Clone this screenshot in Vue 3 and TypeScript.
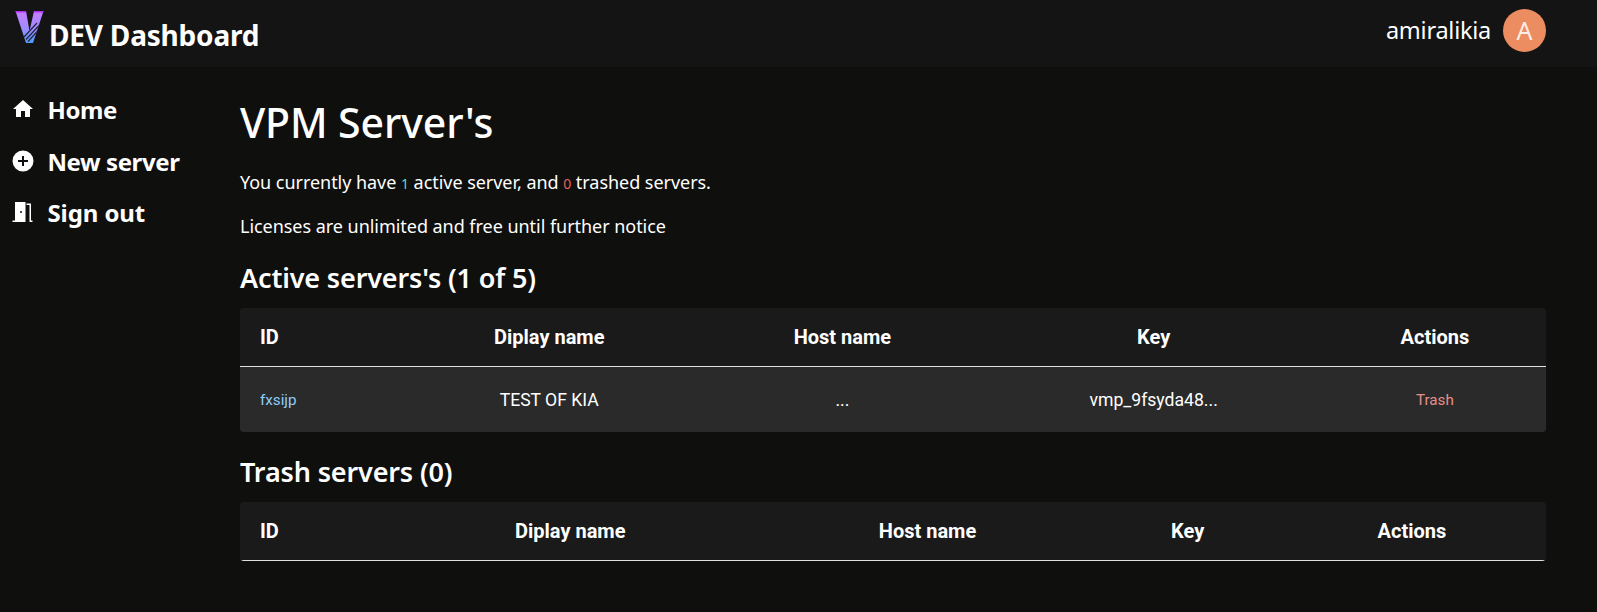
<script setup lang="ts">
interface Col { label: string; width: number }
const activeCols: Col[] = [
  { label: 'ID', width: 157 },
  { label: 'Diplay name', width: 304 },
  { label: 'Host name', width: 282 },
  { label: 'Key', width: 340 },
  { label: 'Actions', width: 222 },
]
const trashCols: Col[] = [
  { label: 'ID', width: 143 },
  { label: 'Diplay name', width: 374 },
  { label: 'Host name', width: 340 },
  { label: 'Key', width: 180 },
  { label: 'Actions', width: 268 },
]
</script>

<template>
  <div class="page">
    <header class="topbar">
      <div class="brand">
        <svg class="logo" width="30" height="34" viewBox="0 0 30 34">
          <defs>
            <linearGradient id="vg" x1="0" y1="0" x2="0" y2="1">
              <stop offset="0" stop-color="#c77dff" />
              <stop offset="0.55" stop-color="#a08cff" />
              <stop offset="1" stop-color="#4a9bff" />
            </linearGradient>
            <clipPath id="vc"><path d="M0.500 1H11L14.500 21L19 1H28.500L18 33H11Z" /></clipPath>
          </defs>
          <path d="M0.500 1H11L14.500 21L19 1H28.500L18 33H11Z" fill="url(#vg)" />
          <path d="M0.500 1H11L11.300 2.500H1ZM19 1H28.500L28 2.500H18.700Z" fill="#b030f0" />
          <g clip-path="url(#vc)" stroke="#23233a" stroke-width="1.200">
            <path d="M9 27L22 13M11 29.500L24 15.500M13 31.500L24 19.500" />
          </g>
        </svg>
        <span class="brand-text">DEV Dashboard</span>
      </div>
      <div class="user">
        <span class="user-name">amiralikia</span>
        <span class="avatar">A</span>
      </div>
    </header>

    <div class="body">
      <nav class="side">
        <a class="nav-item">
          <svg class="nav-icon" width="24" height="24" viewBox="0 0 24 24"><path d="M10 20v-6h4v6h5v-8h3L12 3 2 12h3v8z" fill="#fff" /></svg>
          <span>Home</span>
        </a>
        <a class="nav-item">
          <svg class="nav-icon" width="24" height="24" viewBox="0 0 24 24"><path d="M12 1.500a10.500 10.500 0 1 0 0 21 10.500 10.500 0 0 0 0-21zM17 13h-4v4h-2v-4H7v-2h4V7h2v4h4z" fill="#fff" /></svg>
          <span>New server</span>
        </a>
        <a class="nav-item signout">
          <svg class="nav-icon" width="24" height="24" viewBox="0 0 24 24"><path d="M4 2h10.500v20H1.500v-1.500H4zM10 11a1 1 0 1 0 0 2 1 1 0 0 0 0-2zM15.500 3.500H20V20.500h1.500V22H18.500V5H15.500z" fill="#fff" fill-rule="evenodd" /></svg>
          <span>Sign out</span>
        </a>
      </nav>

      <main class="main">
        <h1 class="title">VPM Server's</h1>
        <p class="line">You currently have <small class="ok">1</small> active server, and <small class="bad">0</small> trashed servers.</p>
        <p class="line">Licenses are unlimited and free until further notice</p>

        <h2 class="section first">Active servers's (1 of 5)</h2>
        <div class="card">
          <table class="grid">
            <colgroup><col v-for="c in activeCols" :key="c.label" :style="{ width: c.width + 'px' }" /></colgroup>
            <thead><tr><th v-for="c in activeCols" :key="c.label">{{ c.label }}</th></tr></thead>
            <tbody>
              <tr>
                <td class="link">fxsijp</td>
                <td>TEST OF KIA</td>
                <td>...</td>
                <td>vmp_9fsyda48...</td>
                <td class="danger">Trash</td>
              </tr>
            </tbody>
          </table>
        </div>

        <h2 class="section">Trash servers (0)</h2>
        <div class="card">
          <table class="grid">
            <colgroup><col v-for="c in trashCols" :key="c.label" :style="{ width: c.width + 'px' }" /></colgroup>
            <thead><tr><th v-for="c in trashCols" :key="c.label">{{ c.label }}</th></tr></thead>
          </table>
        </div>
      </main>
    </div>
  </div>
</template>

<style>
html, body { background: #0f0f0e; }
</style>

<style scoped>
.page {
  width: 1597px;
  height: 612px;
  overflow: hidden;
  background: #0f0f0e;
  color: #fff;
  font-family: "Noto Sans", "Open Sans", sans-serif;
}
.topbar {
  height: 67px;
  background: #141414;
  display: flex;
  justify-content: space-between;
  padding: 0 51px 0 15px;
  box-sizing: border-box;
}
.brand { display: flex; align-items: flex-start; }
.logo { margin-top: 10px; }
.brand-text { font-size: 28px; font-weight: 700; line-height: 36px; margin-top: 17px; margin-left: 4px; letter-spacing: -0.2px; }
.user { display: flex; align-items: center; gap: 12px; padding-bottom: 7px; }
.user-name { font-size: 23.5px; line-height: 30px; letter-spacing: -0.25px; }
.avatar {
  width: 43px;
  height: 43px;
  border-radius: 50%;
  background: #ec8c61;
  color: #fdeee6;
  display: flex;
  align-items: center;
  justify-content: center;
  font-size: 25px;
}
.body { display: flex; }
.side {
  width: 240px;
  flex: none;
  box-sizing: border-box;
  padding: 16px 0 0 11px;
  display: flex;
  flex-direction: column;
}
.nav-item {
  display: flex;
  align-items: center;
  height: 52px;
  gap: 12.5px;
  font-size: 24px;
  font-weight: 700;
  letter-spacing: -0.4px;
}
.nav-item.signout { margin-top: -1px; letter-spacing: -0.1px; }
.nav-icon { flex: none; }
.main { flex: none; width: 1306px; padding-top: 27px; }
.title { margin: 0; font-size: 41px; font-weight: 500; line-height: 56px; letter-spacing: -0.1px; }
.line { margin: 0 0 18px; font-size: 18px; line-height: 24px; letter-spacing: -0.04px; }
.title + .line { margin-top: 20px; }
.ok { font-size: 14px; color: #5fd9c0; }
.bad { font-size: 14px; color: #e5605f; }
.section { margin: 22px 0 12px; font-size: 27px; font-weight: 600; line-height: 36px; letter-spacing: -0.15px; }
.section.first { margin-top: 22px; }
.card { border-radius: 4px; overflow: hidden; background: #1a1a1a; }
.grid { width: 100%; table-layout: fixed; border-collapse: collapse; font-family: Roboto, sans-serif; }
th {
  height: 58px;
  padding: 0;
  text-align: center;
  font-size: 20px;
  font-weight: 700;
  border-bottom: 1px solid #e0e0e0;
  background: #1a1a1a;
}
th:first-child, td:first-child { text-align: left; padding-left: 20px; }
td {
  height: 65px;
  padding: 0;
  text-align: center;
  font-size: 17.6px;
  background: #2a2a2a;
}
.link { color: #90caf9; font-size: 15.2px; }
.danger { color: #e58f8a; font-size: 15.2px; }
</style>
